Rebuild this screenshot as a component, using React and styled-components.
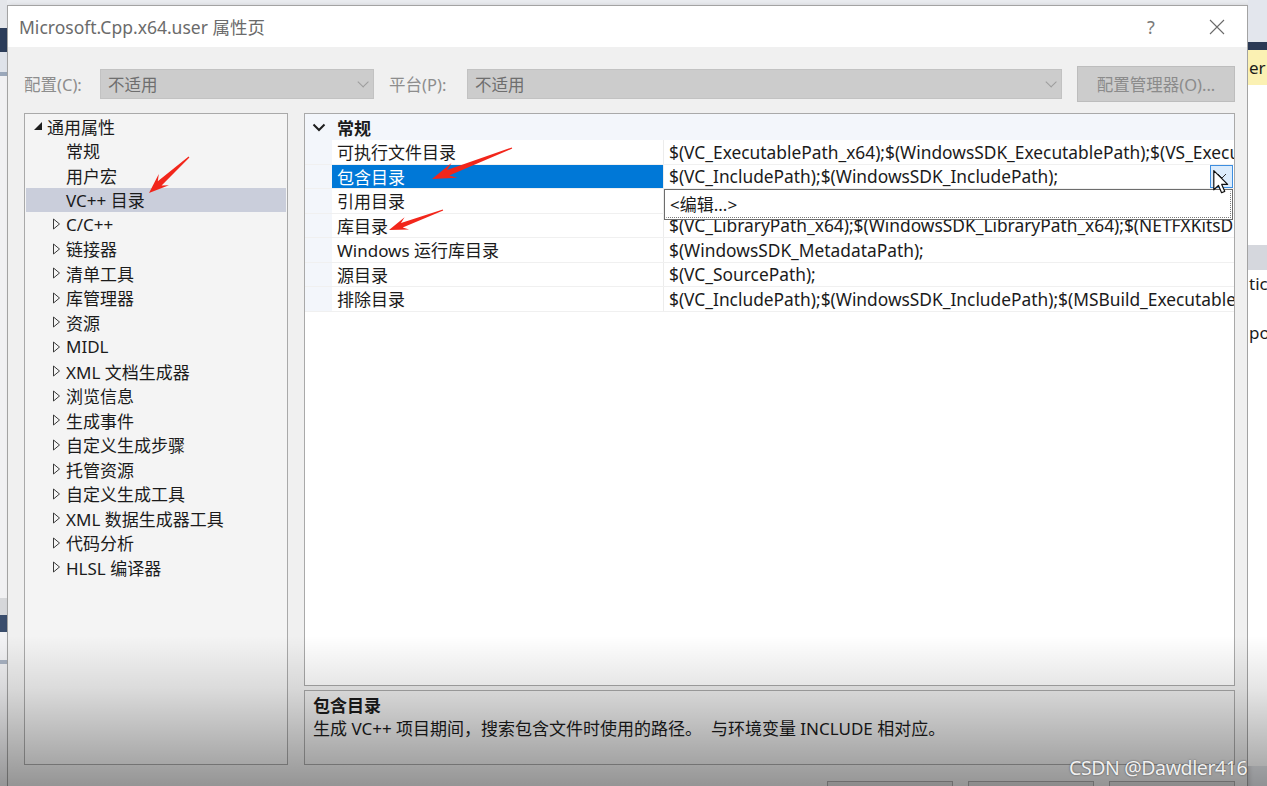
import React from "react";
import styled, { createGlobalStyle } from "styled-components";

const GlobalStyle = createGlobalStyle`
  html, body {
    margin: 0;
    padding: 0;
    background: #e9ebef;
  }
  body {
    font-family: "Noto Sans", "Noto Sans CJK SC", sans-serif;
    color: #1b1b1b;
  }
  * {
    box-sizing: border-box;
  }
`;

const treeItems = [
  { label: "通用属性", kind: "root" },
  { label: "常规", kind: "leaf" },
  { label: "用户宏", kind: "leaf" },
  { label: "VC++ 目录", kind: "leaf", selected: true },
  { label: "C/C++", kind: "closed" },
  { label: "链接器", kind: "closed" },
  { label: "清单工具", kind: "closed" },
  { label: "库管理器", kind: "closed" },
  { label: "资源", kind: "closed" },
  { label: "MIDL", kind: "closed" },
  { label: "XML 文档生成器", kind: "closed" },
  { label: "浏览信息", kind: "closed" },
  { label: "生成事件", kind: "closed" },
  { label: "自定义生成步骤", kind: "closed" },
  { label: "托管资源", kind: "closed" },
  { label: "自定义生成工具", kind: "closed" },
  { label: "XML 数据生成器工具", kind: "closed" },
  { label: "代码分析", kind: "closed" },
  { label: "HLSL 编译器", kind: "closed" },
];

const props = [
  { name: "可执行文件目录", value: "$(VC_ExecutablePath_x64);$(WindowsSDK_ExecutablePath);$(VS_ExecutablePath);$(MSBuild_ExecutablePath)" },
  { name: "包含目录", value: "$(VC_IncludePath);$(WindowsSDK_IncludePath);", selected: true },
  { name: "引用目录", value: "$(VC_ReferencesPath_x64);" },
  { name: "库目录", value: "$(VC_LibraryPath_x64);$(WindowsSDK_LibraryPath_x64);$(NETFXKitsDir)Lib\\um\\x64" },
  { name: "Windows 运行库目录", value: "$(WindowsSDK_MetadataPath);" },
  { name: "源目录", value: "$(VC_SourcePath);" },
  { name: "排除目录", value: "$(VC_IncludePath);$(WindowsSDK_IncludePath);$(MSBuild_ExecutablePath);$(VC_LibraryPath_x64)" },
];

// backdrop strips of the app behind the dialog
const leftBands = [
  { h: 28, c: "#e4e6ea" },
  { h: 24, c: "#2c3d5a" },
  { h: 20, c: "#dfe3ea" },
  { h: 4, c: "#9aa7ba" },
  { h: 522, c: "#f1f1f3" },
  { h: 17, c: "#d6d7da" },
  { h: 17, c: "#3a4d6c" },
  { h: 28, c: "#f3f3f5" },
  { h: 4, c: "#a9b3c3" },
  { h: 122, c: "#f1f1f3" },
];

const rightBands = [
  { h: 42, c: "#e3e6ed" },
  { h: 8, c: "#2b3a55" },
  { h: 35, c: "#fbf1b3", text: "er" },
  { h: 160, c: "#ffffff" },
  { h: 25, c: "#d5d7dd" },
  { h: 26, c: "#ffffff", text: "tic" },
  { h: 24, c: "#ffffff" },
  { h: 24, c: "#ffffff", text: "po" },
  { h: 422, c: "#ffffff" },
];

function arrowPoints(x1, y1, x2, y2, head, half) {
  const dx = x2 - x1;
  const dy = y2 - y1;
  const len = Math.hypot(dx, dy);
  const ux = dx / len;
  const uy = dy / len;
  const nx = -uy;
  const ny = ux;
  const bx = x2 - ux * head;
  const by = y2 - uy * head;
  const sx = x2 - ux * (head * 0.72);
  const sy = y2 - uy * (head * 0.72);
  const tw = 0.6;
  const sw = half * 0.38;
  const pts = [
    [x1 + nx * tw, y1 + ny * tw],
    [sx + nx * sw, sy + ny * sw],
    [bx + nx * half, by + ny * half],
    [x2, y2],
    [bx - nx * half, by - ny * half],
    [sx - nx * sw, sy - ny * sw],
    [x1 - nx * tw, y1 - ny * tw],
  ];
  return pts.map((p) => p.map((v) => v.toFixed(1)).join(",")).join(" ");
}

const arrows = [
  { x1: 189, y1: 157, x2: 149, y2: 193, head: 20, half: 7.5 },
  { x1: 512, y1: 148, x2: 432, y2: 179, head: 24, half: 8 },
  { x1: 443, y1: 210, x2: 389, y2: 230, head: 19, half: 6.5 },
];

export default function App() {
  return (
    <>
      <GlobalStyle />
      <Screen>
        <Backdrop $width={7}>
          {leftBands.map((b, i) => (
            <Band key={i} $h={b.h} $c={b.c} />
          ))}
        </Backdrop>

        <Dialog>
          <TitleBar>
            <TitleText>Microsoft.Cpp.x64.user 属性页</TitleText>
            <TitleButtons>
              <TitleButton>?</TitleButton>
              <TitleButton>
                <svg width="16" height="16" viewBox="0 0 16 16">
                  <path d="M1 1 L15 15 M15 1 L1 15" stroke="#6a6a6a" strokeWidth="1.1" fill="none" />
                </svg>
              </TitleButton>
            </TitleButtons>
          </TitleBar>

          <Body>
            <ConfigRow>
              <FieldLabel $w={76}>配置(C):</FieldLabel>
              <Combo $w={274}>
                <span>不适用</span>
                <ComboChevron />
              </Combo>
              <FieldLabel $w={78} $gap={15}>平台(P):</FieldLabel>
              <Combo $w={595}>
                <span>不适用</span>
                <ComboChevron />
              </Combo>
              <ManagerButton>配置管理器(O)...</ManagerButton>
            </ConfigRow>

            <Panels>
              <Tree>
                {treeItems.map((item) => (
                  <TreeRow key={item.label} $selected={item.selected} $indent={item.kind === "root" ? 8 : 27}>
                    {item.kind === "root" && (
                      <Expander>
                        <svg width="10" height="10" viewBox="0 0 10 10">
                          <path d="M9 1 L9 9 L1 9 Z" fill="#1e1e1e" />
                        </svg>
                      </Expander>
                    )}
                    {item.kind === "closed" && (
                      <Expander>
                        <svg width="10" height="12" viewBox="0 0 10 12">
                          <path d="M1.5 1 L7.5 6 L1.5 11 Z" fill="none" stroke="#3a3a3a" strokeWidth="1" />
                        </svg>
                      </Expander>
                    )}
                    {item.kind === "leaf" && <Expander />}
                    <TreeLabel>{item.label}</TreeLabel>
                  </TreeRow>
                ))}
              </Tree>

              <RightColumn>
                <Grid>
                  <GroupHeader>
                    <GroupChevron>
                      <svg width="14" height="9" viewBox="0 0 14 9">
                        <path d="M1.5 1.5 L7 7 L12.5 1.5" fill="none" stroke="#1e1e1e" strokeWidth="2" />
                      </svg>
                    </GroupChevron>
                    <GroupTitle>常规</GroupTitle>
                  </GroupHeader>
                  {props.map((p) => (
                    <PropRow key={p.name}>
                      <Gutter />
                      <NameCell $selected={p.selected}>{p.name}</NameCell>
                      <ValueCell>
                        <ValueText>{p.value}</ValueText>
                        {p.selected && (
                          <>
                            <DropButton>
                              <svg width="10" height="6" viewBox="0 0 10 6">
                                <path d="M1 1 L5 5 L9 1" fill="none" stroke="#333" strokeWidth="1" />
                              </svg>
                            </DropButton>
                            <DropList>
                              <DropItem>&lt;编辑...&gt;</DropItem>
                            </DropList>
                            <Cursor width="16" height="24" viewBox="0 0 13 20">
                              <path
                                d="M0.5 0.5 L0.5 16.5 L4.4 12.9 L7 18.9 L9.6 17.8 L7.1 12 L12 12 Z"
                                fill="#ffffff"
                                stroke="#111"
                                strokeWidth="1"
                                strokeLinejoin="round"
                              />
                            </Cursor>
                          </>
                        )}
                      </ValueCell>
                    </PropRow>
                  ))}
                  <GridFiller />
                </Grid>
                <Description>
                  <DescTitle>包含目录</DescTitle>
                  <DescText>生成 VC++ 项目期间，搜索包含文件时使用的路径。&nbsp; 与环境变量 INCLUDE 相对应。</DescText>
                </Description>
              </RightColumn>
            </Panels>

            <FooterButtons>
              <FooterButton>确定</FooterButton>
              <FooterButton>取消</FooterButton>
              <FooterButton>应用(A)</FooterButton>
            </FooterButtons>
          </Body>
        </Dialog>

        <Backdrop $width={19}>
          {rightBands.map((b, i) => (
            <Band key={i} $h={b.h} $c={b.c}>
              {b.text && <BandText>{b.text}</BandText>}
            </Band>
          ))}
        </Backdrop>

        <Annotations width="1267" height="786" viewBox="0 0 1267 786">
          {arrows.map((a, i) => (
            <polygon key={i} points={arrowPoints(a.x1, a.y1, a.x2, a.y2, a.head, a.half)} fill="#f2261b" />
          ))}
        </Annotations>

        <BottomShade />
        <Watermark>CSDN @Dawdler416</Watermark>
      </Screen>
    </>
  );
}

const Screen = styled.div`
  position: relative;
  width: 1267px;
  height: 786px;
  overflow: hidden;
  display: flex;
  align-items: flex-start;
`;

const Backdrop = styled.div`
  width: ${(p) => p.$width}px;
  height: 786px;
  flex-shrink: 0;
  display: flex;
  flex-direction: column;
  overflow: hidden;
`;

const Band = styled.div`
  height: ${(p) => p.$h}px;
  flex-shrink: 0;
  background: ${(p) => p.$c};
  display: flex;
  align-items: center;
  overflow: hidden;
`;

const BandText = styled.span`
  font-size: 17px;
  color: #1b1b1b;
  margin-left: 1px;
  white-space: nowrap;
`;

const Dialog = styled.div`
  width: 1241px;
  height: 800px;
  margin-top: 5px;
  flex-shrink: 0;
  display: flex;
  flex-direction: column;
  background: #f0f0f0;
  border: 1px solid #a3a3a3;
  box-shadow: 2px 0 4px rgba(0, 0, 0, 0.12);
`;

const TitleBar = styled.div`
  height: 41px;
  background: #ffffff;
  display: flex;
  align-items: center;
  padding-left: 11px;
  flex-shrink: 0;
`;

const TitleText = styled.div`
  font-size: 17.5px;
  color: #6b6b6b;
`;

const TitleButtons = styled.div`
  margin-left: auto;
  display: flex;
  gap: 20px;
  padding-right: 7px;
`;

const TitleButton = styled.div`
  width: 46px;
  height: 30px;
  display: flex;
  align-items: center;
  justify-content: center;
  font-size: 18px;
  color: #7a7a7a;
`;

const Body = styled.div`
  flex: 1;
  display: flex;
  flex-direction: column;
  padding: 19px 12px 0 16px;
`;

const ConfigRow = styled.div`
  height: 36px;
  display: flex;
  align-items: center;
`;

const FieldLabel = styled.div`
  width: ${(p) => p.$w}px;
  margin-left: ${(p) => p.$gap || 0}px;
  font-size: 16.5px;
  color: #8d8d8d;
  flex-shrink: 0;
`;

const Combo = styled.div`
  width: ${(p) => p.$w}px;
  height: 30px;
  flex-shrink: 0;
  display: flex;
  align-items: center;
  justify-content: space-between;
  padding: 0 8px 0 7px;
  background: #cccccc;
  border: 1px solid #c2c2c2;
  font-size: 16.5px;
  color: #6e6e6e;
`;

const ComboChevron = styled.span`
  width: 8px;
  height: 8px;
  border-right: 1px solid #9d9d9d;
  border-bottom: 1px solid #9d9d9d;
  transform: rotate(45deg) translateY(-3px);
`;

const ManagerButton = styled.div`
  width: 158px;
  height: 36px;
  margin-left: 15px;
  flex-shrink: 0;
  display: flex;
  align-items: center;
  justify-content: center;
  background: #cccccc;
  border: 1px solid #bdbdbd;
  font-size: 16.5px;
  color: #8b8b8b;
`;

const Panels = styled.div`
  margin-top: 11px;
  height: 652px;
  display: flex;
  gap: 16px;
  flex-shrink: 0;
`;

const Tree = styled.div`
  width: 264px;
  flex-shrink: 0;
  background: #f4f4f4;
  border: 1px solid #a9a9a9;
  padding-top: 0;
  display: flex;
  flex-direction: column;
`;

const TreeRow = styled.div`
  height: 24.5px;
  margin: 0 1px;
  display: flex;
  align-items: center;
  padding-left: ${(p) => p.$indent - 1}px;
  background: ${(p) => (p.$selected ? "#cacedb" : "transparent")};
`;

const Expander = styled.span`
  width: 13px;
  height: 14px;
  display: flex;
  align-items: center;
  justify-content: flex-start;
  flex-shrink: 0;
  margin-right: 1px;
`;

const TreeLabel = styled.span`
  font-size: 17px;
  color: #1b1b1b;
  white-space: nowrap;
`;

const RightColumn = styled.div`
  flex: 1;
  display: flex;
  flex-direction: column;
  gap: 4px;
  min-width: 0;
`;

const Grid = styled.div`
  flex: 1;
  background: #ffffff;
  border: 1px solid #a9a9a9;
  display: flex;
  flex-direction: column;
  min-width: 0;
`;

const GroupHeader = styled.div`
  height: 26px;
  flex-shrink: 0;
  display: flex;
  align-items: center;
  background: #f3f6fb;
`;

const GroupChevron = styled.span`
  width: 32px;
  padding-left: 7px;
  display: flex;
  align-items: center;
`;

const GroupTitle = styled.span`
  font-size: 17px;
  font-weight: 700;
  color: #1b1b1b;
`;

const PropRow = styled.div`
  height: 24.5px;
  flex-shrink: 0;
  display: flex;
  border-bottom: 1px solid #f0f0f0;
`;

const Gutter = styled.div`
  width: 27px;
  flex-shrink: 0;
  background: #f3f6fb;
`;

const NameCell = styled.div`
  width: 332px;
  flex-shrink: 0;
  display: flex;
  align-items: center;
  padding-left: 5px;
  font-size: 17px;
  white-space: nowrap;
  border-right: 1px solid #ececec;
  background: ${(p) => (p.$selected ? "#0078d7" : "#ffffff")};
  color: ${(p) => (p.$selected ? "#ffffff" : "#1b1b1b")};
`;

const ValueCell = styled.div`
  position: relative;
  flex: 1;
  min-width: 0;
  display: flex;
  align-items: center;
  padding-left: 5px;
`;

const ValueText = styled.span`
  flex: 1;
  min-width: 0;
  overflow: hidden;
  white-space: nowrap;
  font-size: 17.35px;
  color: #1b1b1b;
`;

const DropButton = styled.div`
  width: 23px;
  height: 23px;
  flex-shrink: 0;
  margin-right: 1px;
  display: flex;
  align-items: center;
  justify-content: center;
  background: #dcecfc;
  border: 1px solid #3d8ee0;
`;

const DropList = styled.div`
  position: absolute;
  left: 0;
  right: 1px;
  top: calc(100% + 1px);
  height: 31px;
  z-index: 2;
  background: #ffffff;
  border: 1px solid #6d6d6d;
  padding: 1px;
`;

const DropItem = styled.div`
  height: 100%;
  display: flex;
  align-items: center;
  padding-left: 3px;
  padding-bottom: 2px;
  font-size: 17px;
  color: #1b1b1b;
  border: 1px dotted #7a7a7a;
  border-top-color: transparent;
  border-left-color: transparent;
`;

const Cursor = styled.svg`
  position: absolute;
  right: 5px;
  top: 5px;
  z-index: 3;
`;

const GridFiller = styled.div`
  flex: 1;
`;

const Description = styled.div`
  height: 75px;
  flex-shrink: 0;
  background: #f0f0f0;
  border: 1px solid #a9a9a9;
  padding: 3px 8px 0;
`;

const DescTitle = styled.div`
  font-size: 17px;
  font-weight: 700;
  line-height: 23px;
  color: #1b1b1b;
`;

const DescText = styled.div`
  font-size: 17px;
  line-height: 23px;
  color: #1b1b1b;
  white-space: nowrap;
`;

const FooterButtons = styled.div`
  margin-top: 16px;
  display: flex;
  justify-content: flex-end;
  gap: 15px;
`;

const FooterButton = styled.div`
  width: 126px;
  height: 32px;
  display: flex;
  align-items: center;
  justify-content: center;
  background: #e1e1e1;
  border: 1px solid #adadad;
  font-size: 16px;
`;

const Annotations = styled.svg`
  position: absolute;
  left: 0;
  top: 0;
  pointer-events: none;
  z-index: 5;
`;

const BottomShade = styled.div`
  position: absolute;
  left: 0;
  right: 0;
  bottom: 0;
  height: 150px;
  z-index: 6;
  pointer-events: none;
  background: linear-gradient(to bottom, rgba(0, 0, 0, 0) 0%, rgba(0, 0, 0, 0.1) 35%, rgba(0, 0, 0, 0.38) 100%);
`;

const Watermark = styled.div`
  position: absolute;
  left: 1069px;
  top: 754px;
  z-index: 7;
  font-size: 19.5px;
  letter-spacing: -0.4px;
  color: rgba(255, 255, 255, 0.92);
  text-shadow: 0 0 2px rgba(0, 0, 0, 0.55);
  white-space: nowrap;
`;
